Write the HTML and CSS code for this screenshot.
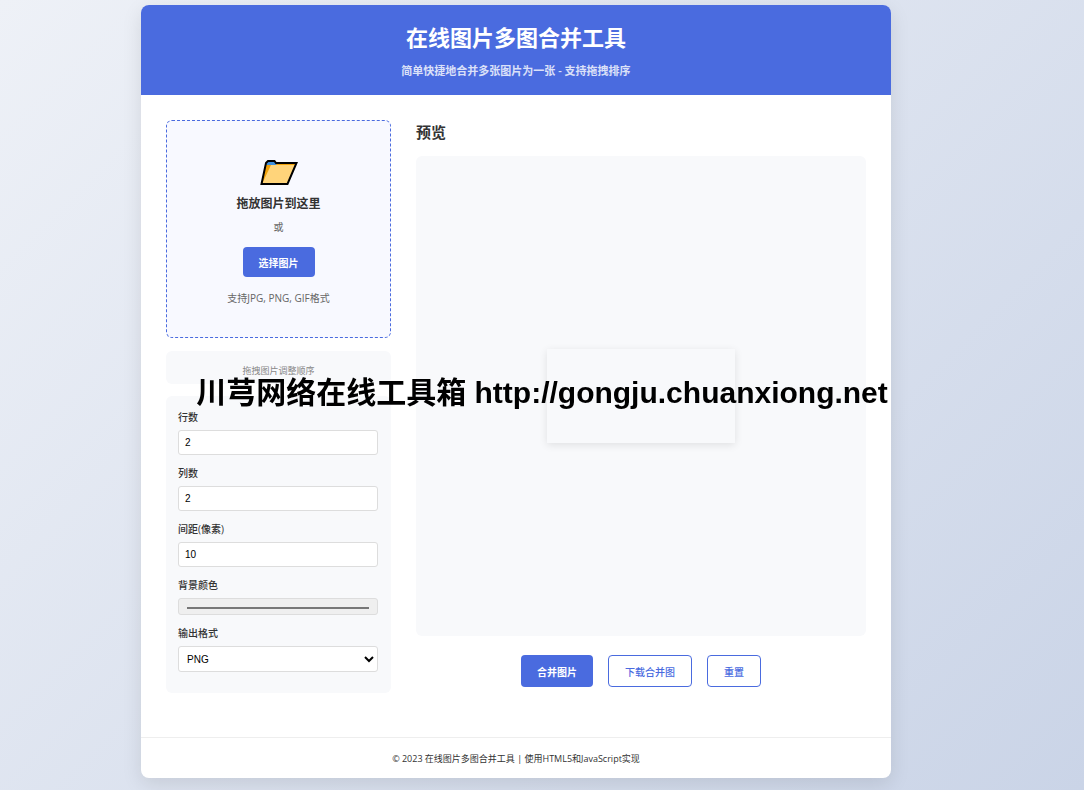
FILE: index.html
```html
<!DOCTYPE html>
<html lang="zh-CN">
<head>
<meta charset="UTF-8">
<meta name="viewport" content="width=device-width, initial-scale=1">
<title>在线图片多图合并工具</title>
<link rel="stylesheet" href="styles.css">
</head>
<body>
<div class="container">
  <header class="header">
    <h1 class="title">在线图片多图合并工具</h1>
    <p class="subtitle">简单快捷地合并多张图片为一张 - 支持拖拽排序</p>
  </header>
  <main class="main">
    <div class="sidebar">
      <section class="dropzone">
        <svg class="folder" viewBox="0 0 38 26" aria-hidden="true">
          <path d="M6 2.500 7.500 1H14l2 2.500h20L27 24H1.500z" fill="#f1a20b"/>
          <path d="M7 1.500h8l1.500 3.500H6z" fill="#3f8fdc"/>
          <path d="M11 5H35L27 24H2z" fill="#ffd47a"/>
          <path d="M6 3 8 1h6.500l1.500 2h20.500L27.500 24H1.500z" fill="none" stroke="#000" stroke-width="2"/>
        </svg>
        <h2 class="drop-title">拖放图片到这里</h2>
        <p class="drop-or">或</p>
        <button class="btn btn-select" type="button">选择图片</button>
        <p class="drop-formats">支持JPG, PNG, GIF格式</p>
      </section>
      <p class="sort-hint">拖拽图片调整顺序</p>
      <form class="settings">
        <div class="field">
          <label class="label" for="rows">行数</label>
          <input class="control" type="number" id="rows" value="2" min="1">
        </div>
        <div class="field">
          <label class="label" for="cols">列数</label>
          <input class="control" type="number" id="cols" value="2" min="1">
        </div>
        <div class="field">
          <label class="label" for="gap">间距(像素)</label>
          <input class="control" type="number" id="gap" value="10" min="0">
        </div>
        <div class="field">
          <label class="label" for="color">背景颜色</label>
          <input class="control control-color" type="color" id="color" value="#ffffff">
        </div>
        <div class="field">
          <label class="label" for="format">输出格式</label>
          <select class="control control-select" id="format">
            <option>PNG</option>
            <option>JPG</option>
          </select>
        </div>
      </form>
    </div>
    <section class="preview">
      <h2 class="preview-title">预览</h2>
      <div class="preview-area">
        <canvas class="canvas" width="188" height="94"></canvas>
      </div>
      <div class="actions">
        <button class="btn" type="button">合并图片</button>
        <button class="btn btn-outline" type="button">下载合并图</button>
        <button class="btn btn-outline" type="button">重置</button>
      </div>
    </section>
  </main>
  <footer class="footer">© 2023 在线图片多图合并工具 | 使用HTML5和JavaScript实现</footer>
</div>
<div class="watermark">川芎网络在线工具箱 http://gongju.chuanxiong.net</div>
</body>
</html>
```
FILE: styles.css
```css
* {
  box-sizing: border-box;
  margin: 0;
  padding: 0;
}

body {
  min-height: 100vh;
  padding: 5px 193px 12px 141px;
  background: linear-gradient(135deg, #eef1f7 0%, #cad4e7 100%);
  color: #333;
  font-family: "Open Sans", "Noto Sans CJK SC", sans-serif;
  font-size: 10px;
  line-height: 16px;
}

.container {
  max-width: 1000px;
  overflow: hidden;
  border-radius: 8px;
  background: #fff;
  box-shadow: 0 6px 20px rgba(0, 0, 0, 0.1);
}

.header {
  padding: 15px 20px 16px;
  background: #4a6bdf;
  color: #fff;
  text-align: center;
}

.title {
  margin-bottom: 9px;
  font-size: 22px;
  line-height: 34px;
}

.subtitle {
  font-size: 11px;
  font-weight: 600;
  opacity: 0.8;
}

.main {
  display: grid;
  grid-template-columns: 1fr 2fr;
  gap: 25px;
  padding: 25px 25px 44px;
}

.sidebar {
  display: flex;
  flex-direction: column;
}

.dropzone {
  display: flex;
  flex-direction: column;
  align-items: center;
  padding: 39px 24px 31px;
  border: 1px dashed #4a6bdf;
  border-radius: 6px;
  background: #f8f9ff;
  text-align: center;
}

.folder {
  width: 38px;
  height: 26px;
  margin-bottom: 10px;
}

.drop-title {
  margin-bottom: 7px;
  font-size: 12px;
  line-height: 16px;
}

.drop-or {
  margin-bottom: 12px;
  color: #666;
}

.drop-formats {
  margin-top: 13px;
  color: #666;
}

.btn {
  padding: 9px 16px 7px;
  border: 0;
  border-radius: 4px;
  background: #4a6bdf;
  color: #fff;
  font: bold 10px/16px "Open Sans", "Noto Sans CJK SC", sans-serif;
  cursor: pointer;
}

.btn-select {
  padding: 8px 16px 6px;
}

.btn-outline {
  padding: 8px 16px 6px;
  border: 1px solid #4a6bdf;
  background: #fff;
  color: #4a6bdf;
  font-weight: 500;
}

.sort-hint {
  margin: 13px 0 12px;
  padding: 12px 12px 5px;
  border-radius: 6px;
  background: #f8f9fb;
  color: #888;
  font-size: 9px;
  text-align: center;
}

.settings {
  display: flex;
  flex-direction: column;
  gap: 10px;
  padding: 13px 13px 21px 12px;
  border-radius: 6px;
  background: #f8f9fb;
}

.field {
  display: flex;
  flex-direction: column;
  gap: 5px;
}

.label {
  font-weight: 500;
}

.control {
  width: 100%;
  height: 25px;
  padding: 6px;
  border: 1px solid #ddd;
  border-radius: 3px;
  background: #fff;
  color: #000;
  font: 10px "Liberation Sans", Arial, sans-serif;
}

.control-color {
  height: 17px;
  background: #efefef;
}

.control-select {
  height: 26px;
  padding: 4px;
}

.preview-title {
  margin-bottom: 12px;
  font-size: 15px;
  line-height: 24px;
}

.preview-area {
  display: flex;
  align-items: center;
  justify-content: center;
  min-height: 480px;
  border-radius: 6px;
  background: #f8f9fb;
}

.canvas {
  max-width: 100%;
  box-shadow: 0 2px 8px rgba(0, 0, 0, 0.1);
}

.actions {
  display: flex;
  justify-content: center;
  gap: 15px;
  margin-top: 19px;
}

.footer {
  padding: 13px 12px 11px;
  border-top: 1px solid #eee;
  font-size: 9px;
  text-align: center;
}

.watermark {
  position: fixed;
  top: 50%;
  left: 50%;
  padding-bottom: 5px;
  transform: translate(-50%, -50%);
  color: #000;
  font: bold 30px/1 "Liberation Sans", "Noto Sans CJK SC", sans-serif;
  white-space: nowrap;
  pointer-events: none;
}
```
